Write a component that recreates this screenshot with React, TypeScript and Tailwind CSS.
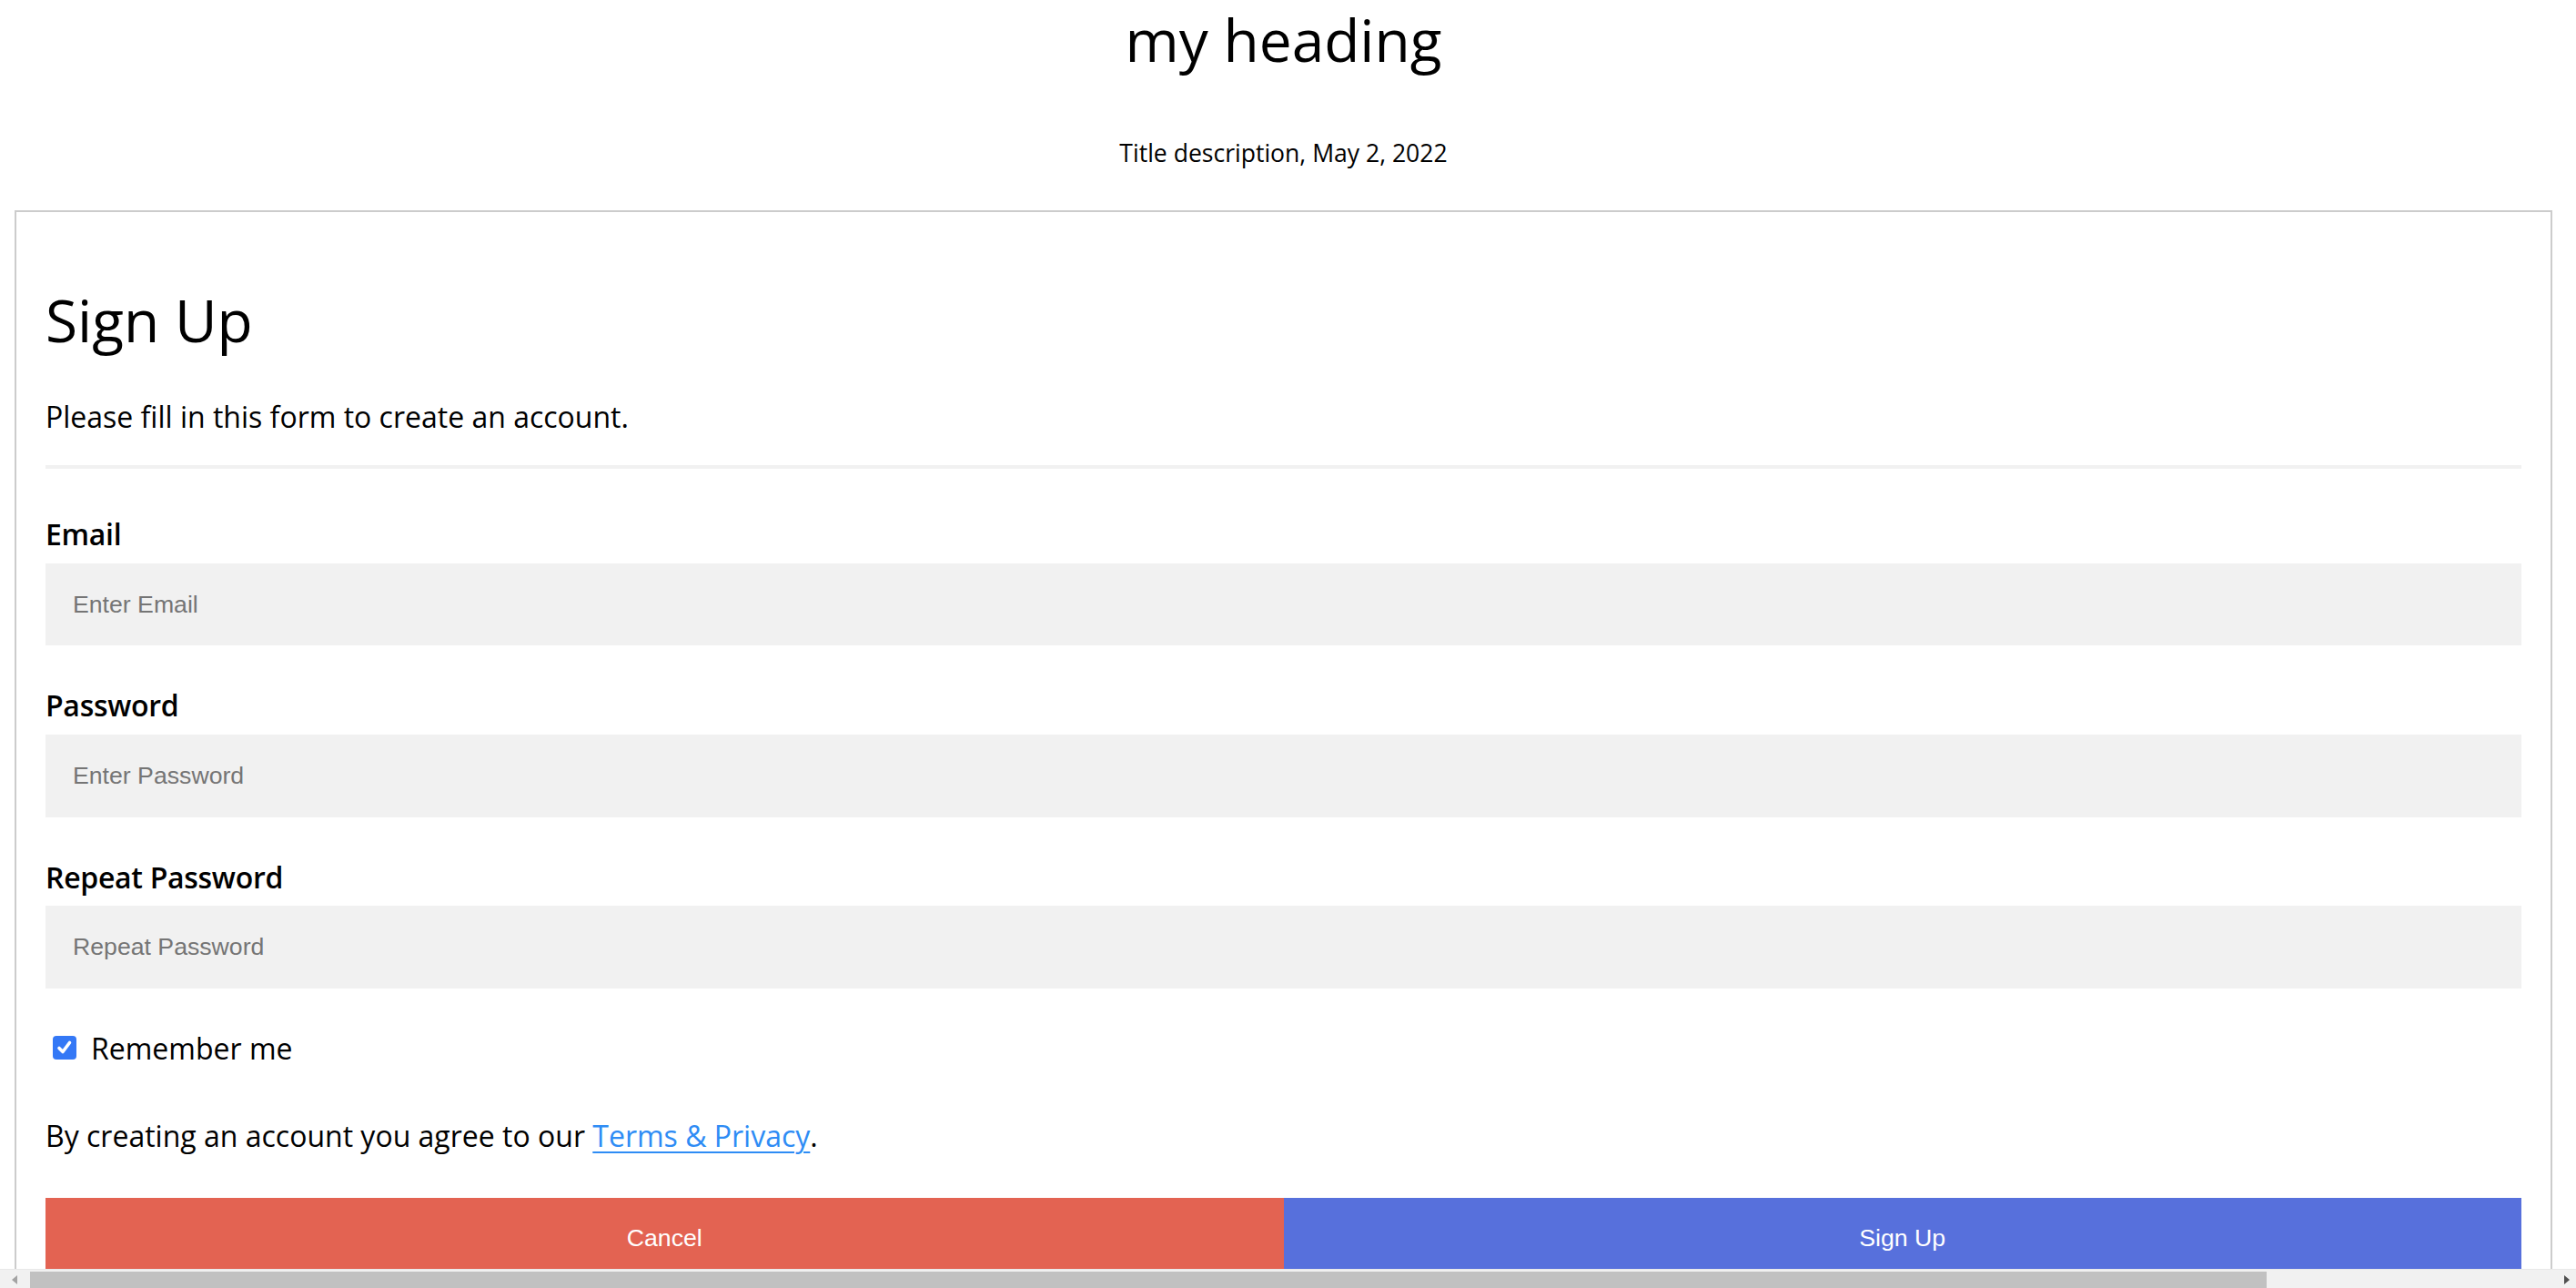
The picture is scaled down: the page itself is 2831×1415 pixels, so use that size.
import React from 'react';

function Field({ label, placeholder }: { label: string; placeholder: string }) {
  return (
    <div>
      <label className="block text-[32px] leading-[43.6px] font-semibold tracking-[-0.3px]">{label}</label>
      <input
        type="text"
        placeholder={placeholder}
        className="mt-[10px] mb-[44px] block h-[90.6px] w-full bg-[#f1f1f1] pl-[30px] font-['Liberation_Sans',Arial,sans-serif] text-[26.67px] text-black outline-none placeholder:text-[#757575]"
      />
    </div>
  );
}

function FakeScrollbar() {
  return (
    <div className="fixed bottom-0 left-0 right-0 h-[21px] border-t border-[#e8e8e8] bg-[#f1f1f1]">
      <div className="absolute left-[33px] top-[2px] bottom-0 w-[2458px] bg-[#c1c1c1]" />
      <svg className="absolute left-[12px] top-[6px]" width="8" height="10" viewBox="0 0 8 10">
        <polygon points="7,0 7,10 1,5" fill="#a3a3a3" />
      </svg>
      <svg className="absolute right-[6px] top-[6px]" width="8" height="10" viewBox="0 0 8 10">
        <polygon points="1,0 1,10 7,5" fill="#505050" />
      </svg>
    </div>
  );
}

export default function App() {
  return (
    <div className="relative h-[1415px] overflow-hidden bg-white font-['Open_Sans',sans-serif] text-black">
      <div className="ml-[16px] w-[2789px]">
        <h1 className="text-center text-[64px] leading-[87px] font-medium">my heading</h1>
        <p className="mt-[63px] text-center text-[26.56px] leading-[36.2px] font-medium">Title description, May 2, 2022</p>

        <form className="mt-[44.5px] border-2 border-[#cccccc] px-[32px] pt-[32px] pb-[40px]">
          <h1 className="mt-[43px] text-[64px] leading-[87px] font-medium">Sign Up</h1>
          <p className="mt-[41px] text-[32px] leading-[43.6px]">Please fill in this form to create an account.</p>
          <div className="mt-[32px] mb-[50px] h-[4px] bg-[#f1f1f1]" />

          <Field label="Email" placeholder="Enter Email" />
          <Field label="Password" placeholder="Enter Password" />
          <Field label="Repeat Password" placeholder="Repeat Password" />

          <div className="flex items-start">
            <span className="ml-[8px] mt-[8px] flex h-[26px] w-[26px] items-center justify-center rounded-[4px] bg-[#3478f6]">
              <svg width="20" height="20" viewBox="0 0 20 20">
                <path d="M4 10.5 L8 14.5 L15.5 4.5" fill="none" stroke="white" strokeWidth="3.6" strokeLinecap="round" strokeLinejoin="round" />
              </svg>
            </span>
            <span className="ml-[16px] text-[32px] leading-[43.6px]">Remember me</span>
          </div>

          <p className="mt-[53px] text-[32px] leading-[43.6px]">
            By creating an account you agree to our{' '}
            <a href="#" className="text-[#2e8cf5] underline decoration-2 underline-offset-[5px]">Terms &amp; Privacy</a>.
          </p>

          <div className="mt-[46.4px] flex font-['Liberation_Sans',Arial,sans-serif] text-[26.67px] text-white">
            <button type="button" className="flex h-[86.6px] w-1/2 items-center justify-center bg-[#e36352]">Cancel</button>
            <button type="submit" className="flex h-[86.6px] w-1/2 items-center justify-center bg-[#5770dc]">Sign Up</button>
          </div>
        </form>
      </div>
      <FakeScrollbar />
    </div>
  );
}
